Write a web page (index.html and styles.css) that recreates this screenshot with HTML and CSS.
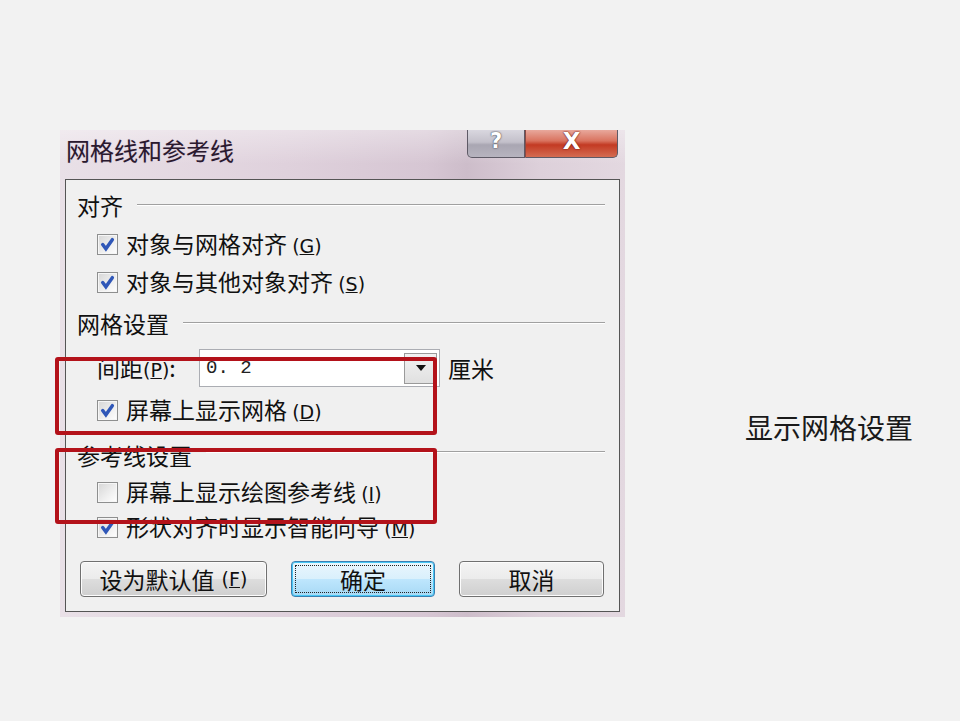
FILE: index.html
```html
<!DOCTYPE html>
<html lang="zh-CN">
<head>
<meta charset="utf-8">
<title>网格线和参考线</title>
<link rel="stylesheet" href="styles.css">
</head>
<body>
<div class="slide">
  <div class="dialog">
    <div class="titlebar">
      <span class="title">网格线和参考线</span>
      <div class="caption">
        <span class="cap help">?</span>
        <span class="cap close">X</span>
      </div>
    </div>
    <div class="panel">
      <div class="group-head"><span>对齐</span><i class="rule"></i></div>
      <div class="row check-row h40"><span class="box"><svg viewBox="0 0 14 14" width="15" height="15"><path d="M2.5 7 L5.5 11 L11.5 2.5" fill="none" stroke="#2f57b8" stroke-width="3.2" stroke-linecap="round"/></svg></span><span class="txt">对象与网格对齐 <span class="mn">(<u>G</u>)</span></span></div>
      <div class="row check-row h36"><span class="box"><svg viewBox="0 0 14 14" width="15" height="15"><path d="M2.5 7 L5.5 11 L11.5 2.5" fill="none" stroke="#2f57b8" stroke-width="3.2" stroke-linecap="round"/></svg></span><span class="txt">对象与其他对象对齐 <span class="mn">(<u>S</u>)</span></span></div>
      <div class="group-head h46"><span>网格设置</span><i class="rule"></i></div>
      <div class="row spacing-row">
        <span class="txt spacing-label">间距<span class="mn">(<u>P</u>)</span>:</span>
        <div class="combo"><span class="val">0. 2</span><span class="drop"><svg viewBox="0 0 10 6" width="10" height="6"><path d="M0 0 H10 L5 6 Z" fill="#111"/></svg></span></div>
        <span class="txt unit">厘米</span>
      </div>
      <div class="row check-row h40"><span class="box"><svg viewBox="0 0 14 14" width="15" height="15"><path d="M2.5 7 L5.5 11 L11.5 2.5" fill="none" stroke="#2f57b8" stroke-width="3.2" stroke-linecap="round"/></svg></span><span class="txt">屏幕上显示网格 <span class="mn">(<u>D</u>)</span></span></div>
      <div class="group-head h44 ref-head"><span>参考线设置</span><i class="rule"></i></div>
      <div class="row check-row h36"><span class="box"></span><span class="txt">屏幕上显示绘图参考线 <span class="mn">(<u>I</u>)</span></span></div>
      <div class="row check-row h34"><span class="box"><svg viewBox="0 0 14 14" width="15" height="15"><path d="M2.5 7 L5.5 11 L11.5 2.5" fill="none" stroke="#2f57b8" stroke-width="3.2" stroke-linecap="round"/></svg></span><span class="txt">形状对齐时显示智能向导 <span class="mn">(<u>M</u>)</span></span></div>
      <div class="buttons">
        <button class="btn w187"><span>设为默认值</span><span class="mn">(<u>F</u>)</span></button>
        <button class="btn w144 focus"><span class="focus-ring">确定</span></button>
        <button class="btn w145">取消</button>
      </div>
    </div>
  </div>
  <p class="label">显示网格设置</p>
  <div class="hl hl-1"></div>
  <div class="hl hl-2"></div>
</div>
</body>
</html>
```
FILE: styles.css
```css
html, body {
  margin: 0;
  padding: 0;
  background: #f2f2f2;
}

.slide {
  position: relative;
  width: 960px;
  height: 721px;
  display: flex;
  align-items: flex-start;
  font-family: "Noto Sans CJK SC", "Noto Sans", sans-serif;
}

.dialog {
  box-sizing: border-box;
  margin: 130px 0 0 60px;
  width: 565px;
  height: 487px;
  padding: 0 5px 5px 5px;
  background: linear-gradient(to right, #e9e0e7 0%, #dfd1dc 40%, #d6c6d3 65%, #cdbdca 72%, #ddd0da 85%, #e3d8e0 100%);
  display: flex;
  flex-direction: column;
}

.titlebar {
  height: 49px;
  display: flex;
  justify-content: space-between;
  align-items: flex-start;
  background: linear-gradient(to bottom, rgba(255,255,255,0.35), rgba(255,255,255,0) 70%);
  margin: 0 -5px;
  padding: 0 7px 0 6px;
}

.title {
  font-size: 24px;
  line-height: 24px;
  margin-top: 8px;
  color: #2a1a2e;
  text-shadow: 0 0 1px rgba(120, 60, 140, 0.35);
}

.caption {
  display: flex;
  height: 28px;
}

.cap {
  box-sizing: border-box;
  height: 28px;
  display: flex;
  align-items: center;
  justify-content: center;
  color: #fff;
  font-family: "DejaVu Sans", sans-serif;
  font-weight: bold;
  font-size: 21px;
  line-height: 1;
  border: 1px solid #5e5a66;
  border-top: none;
}

.help {
  width: 58px;
  border-radius: 0 0 0 5px;
  background: linear-gradient(to bottom, #d9d7df 0%, #c3c0ca 45%, #a9a6b2 55%, #b7b4bf 100%);
  text-shadow: 0 0 2px #4a4a55, 0 0 1px #4a4a55;
  padding-bottom: 4px;
}

.close {
  width: 93px;
  border-left: 1px solid #8b4a44;
  border-radius: 0 0 5px 0;
  background: linear-gradient(to bottom, #e8a89c 0%, #d9735f 40%, #c33a23 55%, #d46c52 100%);
  text-shadow: 0 0 2px #6d1a10, 0 0 1px #6d1a10;
  font-size: 23px;
  padding-bottom: 4px;
}

.panel {
  box-sizing: border-box;
  flex: 1;
  background: #f0f0f0;
  border: 1px solid #555555;
  padding: 6px 14px 14px 11px;
  display: flex;
  flex-direction: column;
  font-size: 23px;
  color: #111;
}

.group-head {
  height: 38px;
  display: flex;
  align-items: center;
  gap: 14px;
  line-height: 1;
}

.group-head.h46 { height: 46px; }
.group-head.h44 { height: 44px; }
.ref-head span { margin-top: 6px; }

.rule {
  flex: 1;
  height: 1px;
  background: #a0a0a0;
  border-bottom: 1px solid #ffffff;
}

.row {
  display: flex;
  align-items: center;
  padding-left: 20px;
  line-height: 1;
}

.h40 { height: 40px; }
.h36 { height: 36px; }
.h34 { height: 34px; }

.box {
  box-sizing: border-box;
  width: 21px;
  height: 21px;
  border: 1px solid #8e8f8f;
  background: linear-gradient(135deg, #d6d6d6 0%, #f0f0f0 60%, #ffffff 100%);
  box-shadow: inset 0 0 0 1px #f6f6f6;
  display: flex;
  align-items: center;
  justify-content: center;
  margin-right: 8px;
  flex: none;
}

.mn {
  font-size: 19px;
  font-family: "DejaVu Sans", "Noto Sans CJK SC", sans-serif;
}

.btn .mn {
  margin-left: 7px;
}

.spacing-row {
  height: 44px;
}

.spacing-label {
  width: 102px;
}

.combo {
  box-sizing: border-box;
  width: 241px;
  height: 38px;
  background: #fff;
  border: 1px solid #abadb3;
  display: flex;
  align-items: center;
  justify-content: space-between;
  padding: 0 2px 0 6px;
}

.val {
  font-family: "Liberation Mono", monospace;
  font-size: 19px;
  align-self: flex-start;
  margin-top: 9px;
  color: #222;
}

.drop {
  box-sizing: border-box;
  width: 33px;
  height: 31px;
  border: 1px solid #9a9a9a;
  background: linear-gradient(to bottom, #f2f2f2, #e0e0e0);
  display: flex;
  align-items: center;
  justify-content: center;
}

.unit {
  margin-left: 8px;
}

.buttons {
  display: flex;
  gap: 24px;
  margin-top: 17px;
  padding-left: 3px;
}

.btn {
  box-sizing: border-box;
  height: 36px;
  border: 1px solid #707070;
  border-radius: 4px;
  background: linear-gradient(to bottom, #f4f4f4 0%, #ebebeb 50%, #dddddd 51%, #cfcfcf 100%);
  box-shadow: inset 0 0 0 1px #fcfcfc;
  font-family: "Noto Sans CJK SC", sans-serif;
  font-size: 23px;
  color: #111;
  padding: 0;
  display: flex;
  align-items: center;
  justify-content: center;
  line-height: 1;
}

.w187 { width: 187px; }
.w144 { width: 144px; }
.w145 { width: 145px; }

.btn.focus {
  border-color: #3c7fb1;
  background: linear-gradient(to bottom, #eaf6fd 0%, #d9f0fc 50%, #bee6fd 51%, #a7d9f5 100%);
  box-shadow: inset 0 0 0 1px #48c7f4;
  padding: 3px;
}

.focus-ring {
  box-sizing: border-box;
  width: 100%;
  height: 100%;
  border: 1px dotted #222;
  display: flex;
  align-items: center;
  justify-content: center;
}

.label {
  margin: 407px 0 0 120px;
  font-size: 28px;
  line-height: 40px;
  color: #1a1a1a;
  white-space: nowrap;
}

.hl {
  position: absolute;
  box-sizing: border-box;
  border: 4px solid #b3121a;
  border-radius: 3px;
  left: 55px;
  width: 382px;
}

.hl-1 {
  top: 357px;
  height: 78px;
}

.hl-2 {
  top: 448px;
  height: 76px;
}
```
